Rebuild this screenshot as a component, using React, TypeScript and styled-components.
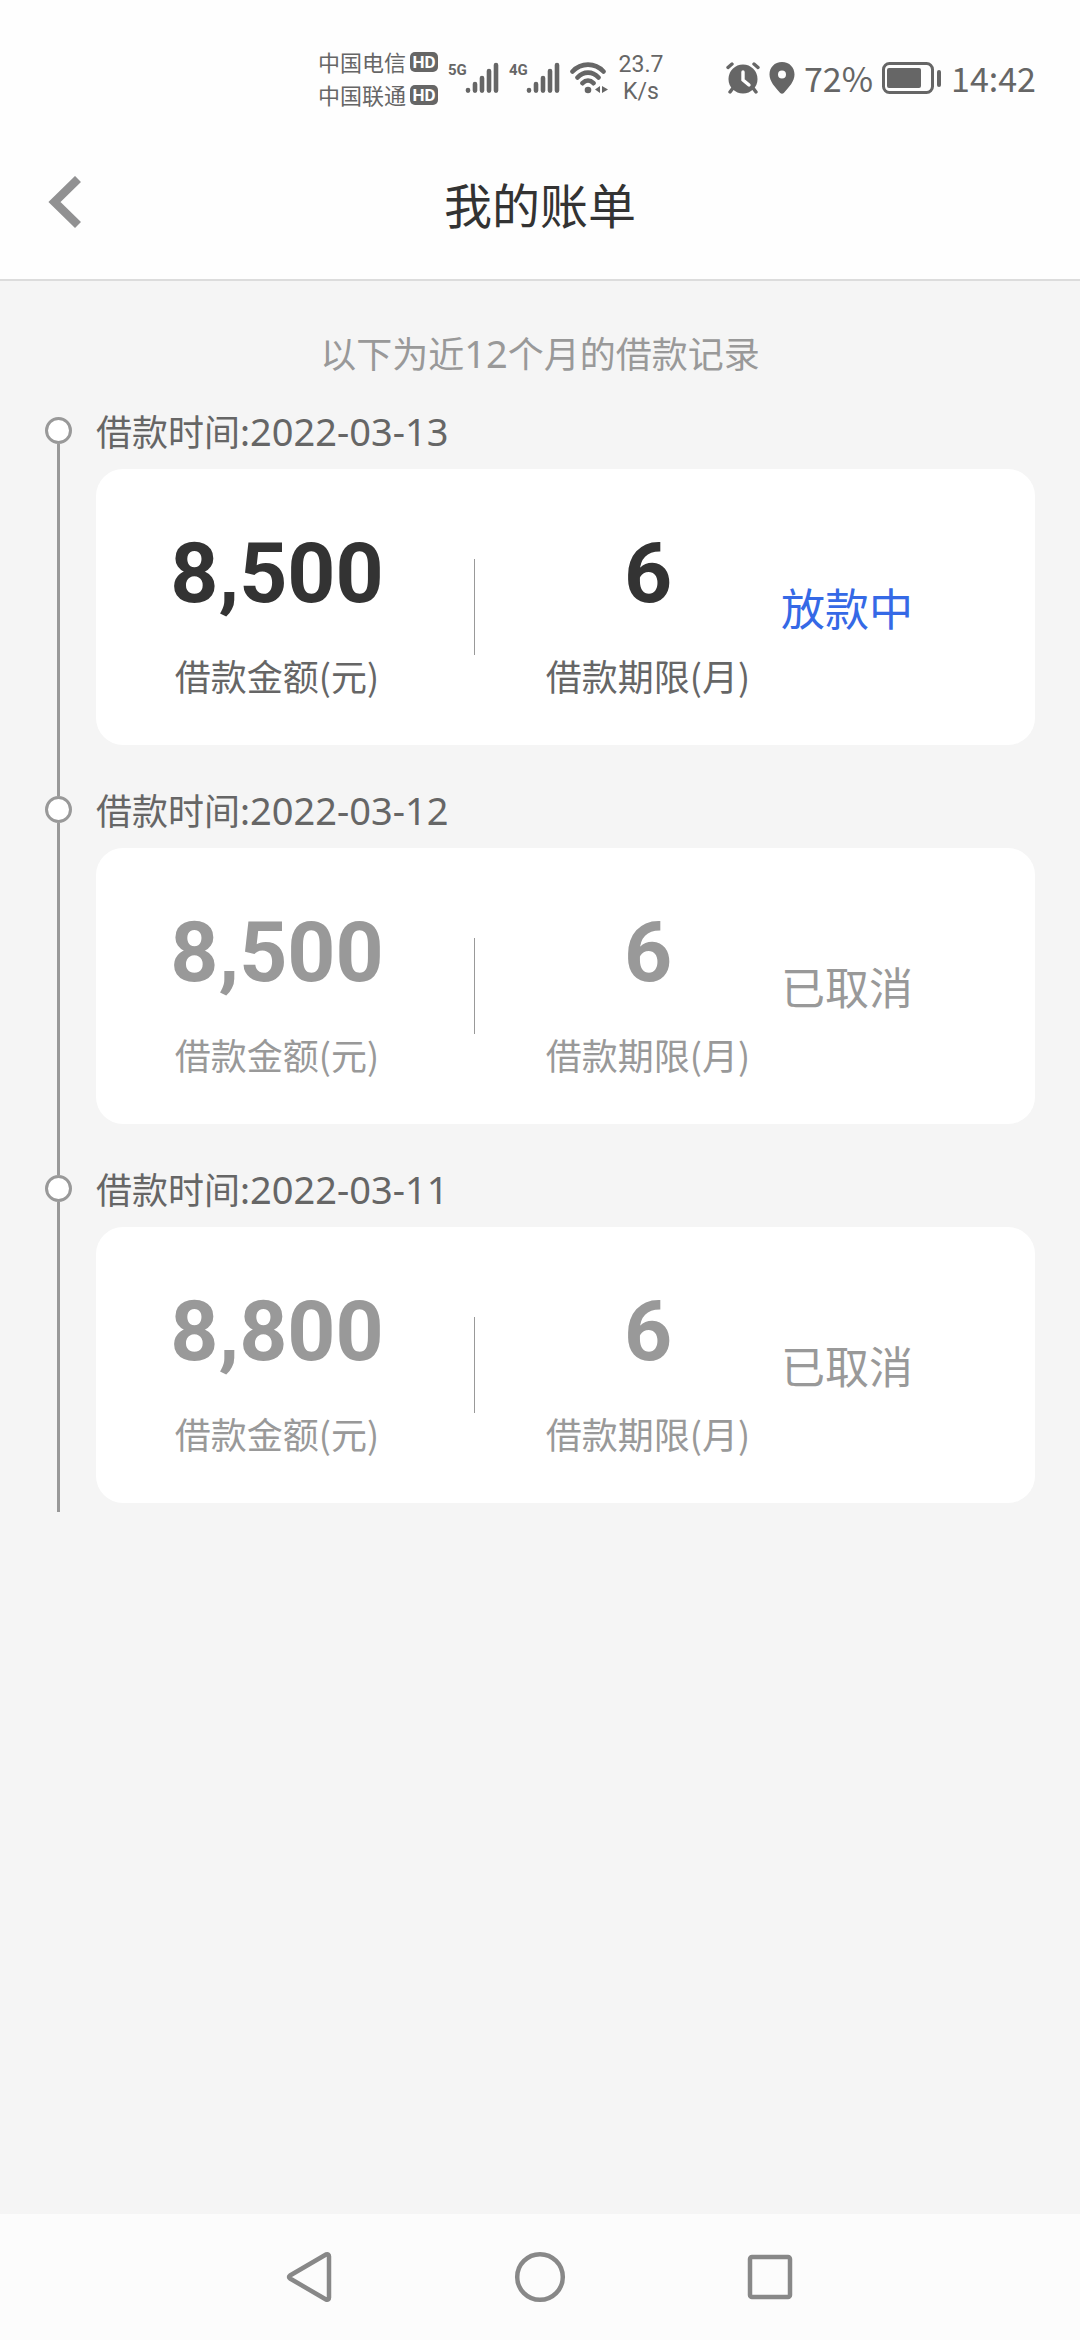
import React from "react";
import styled, { createGlobalStyle } from "styled-components";

const GlobalStyle = createGlobalStyle`
  *, *::before, *::after { box-sizing: border-box; }
  body {
    margin: 0;
    background: #f5f5f5;
    font-family: "Noto Sans CJK SC", sans-serif;
    color: #333;
  }
  h1, p, ol, dl, dt, dd { margin: 0; padding: 0; }
  button { border: 0; padding: 0; background: none; font: inherit; cursor: pointer; }
  svg { display: block; flex: none; }
`;

const Screen = styled.div`
  display: flex;
  flex-direction: column;
  min-height: 100vh;
`;

const StatusBar = styled.div`
  display: flex;
  align-items: center;
  justify-content: flex-end;
  gap: 62px;
  height: 126px;
  padding: 30px 44px 0 0;
  background: #fefefe;
  color: #666;
`;

const StatusGroup = styled.div<{ $gap: number }>`
  display: flex;
  align-items: center;
  gap: ${(p) => p.$gap}px;
`;

const Carriers = styled.div`
  display: flex;
  flex-direction: column;
`;

const Carrier = styled.div`
  display: flex;
  align-items: center;
  gap: 4px;
  font-size: 22px;
  line-height: 33px;
`;

const HdBadge = styled.span`
  width: 28px;
  height: 20px;
  border-radius: 5px;
  background: #666;
  color: #fff;
  font: 700 17px/20px Roboto, sans-serif;
  text-align: center;
`;

const Signal = styled.div`
  display: flex;
  align-items: flex-start;
`;

const SignalType = styled.span`
  width: 17px;
  font: 700 15px/16px Roboto, sans-serif;
`;

const Speed = styled.div`
  width: 46px;
  font: 400 23px/27px Roboto, sans-serif;
  text-align: center;
`;

const StatusText = styled.span`
  font-size: 34px;
  line-height: 40px;
`;

const Header = styled.header`
  display: grid;
  grid-template-columns: 96px 1fr 96px;
  align-items: center;
  height: 155px;
  background: #fefefe;
  border-bottom: 2px solid #dcdcdc;
`;

const BackButton = styled.button`
  display: flex;
  align-items: center;
  height: 96px;
  padding-left: 48px;
`;

const Title = styled.h1`
  font-size: 48px;
  line-height: 72px;
  font-weight: 400;
  text-align: center;
`;

const Main = styled.main`
  flex: 1;
  padding: 44px 45px 40px;
`;

const Latin = styled.span`
  font-family: "Noto Sans", sans-serif;
  font-size: 38px;
  line-height: 1;
`;

const Hint = styled.p`
  font-size: 36px;
  line-height: 54px;
  color: #999;
  text-align: center;
`;

const Timeline = styled.ol`
  list-style: none;
  margin-top: 24px;
`;

const Entry = styled.li`
  display: grid;
  grid-template-columns: 27px 1fr;
  column-gap: 24px;
`;

const Rail = styled.div`
  display: flex;
  flex-direction: column;
  align-items: center;
`;

const RailLine = styled.span<{ $hidden?: boolean; $lead?: boolean }>`
  width: 3px;
  flex: ${(p) => (p.$lead ? "0 0 14px" : "1")};
  background: ${(p) => (p.$hidden ? "transparent" : "#999")};
`;

const Dot = styled.span`
  width: 27px;
  height: 27px;
  border: 3px solid #999;
  border-radius: 50%;
  background: #fff;
`;

const EntryBody = styled.div<{ $last: boolean }>`
  padding-bottom: ${(p) => (p.$last ? 9 : 37)}px;
`;

const EntryDate = styled.p`
  padding-bottom: 12px;
  font-size: 36px;
  line-height: 54px;
  color: #666;
`;

const Card = styled.dl<{ $active: boolean }>`
  display: grid;
  grid-template-columns: 378fr 1px 306fr 254fr;
  align-items: center;
  height: 276px;
  border-radius: 27px;
  background: #fff;
  color: ${(p) => (p.$active ? "#333" : "#999")};
`;

const Figure = styled.div<{ $side: "left" | "right" }>`
  display: flex;
  flex-direction: column-reverse;
  align-items: center;
  gap: 26px;
  padding: ${(p) => (p.$side === "left" ? "14px 16px 0 0" : "14px 0 0 40px")};
`;

const FigureValue = styled.dd`
  font: 700 84px/96px Roboto, sans-serif;
`;

const FigureLabel = styled.dt<{ $active: boolean }>`
  font-size: 36px;
  line-height: 54px;
  white-space: nowrap;
  color: ${(p) => (p.$active ? "#666" : "#999")};
`;

const Divider = styled.div`
  height: 96px;
  background: #999;
`;

const Status = styled.p<{ $active: boolean }>`
  font-size: 44px;
  line-height: 66px;
  white-space: nowrap;
  color: ${(p) => (p.$active ? "#3569e6" : "#999")};
`;

const NavBar = styled.nav`
  display: flex;
  align-items: center;
  justify-content: center;
  gap: 130px;
  height: 126px;
  background: #fcfcfc;
`;

const NavButton = styled.button`
  display: flex;
  align-items: center;
  justify-content: center;
  width: 100px;
  height: 100px;
`;

const SignalBars = () => (
  <svg width="34" height="32" viewBox="0 0 34 32" stroke="#666" strokeWidth="4.600" strokeLinecap="round">
    <path d="M3 28v.6M10 22v6.600M17 16v12.600M24 9v19.600M31 3v25.600" />
  </svg>
);

const WifiIcon = () => (
  <svg width="38" height="32" viewBox="0 0 38 32" fill="none" stroke="#666" strokeWidth="4.600" strokeLinecap="round">
    <path d="M2.500 9.500C11 .3 25 .3 33.500 9.500M7.500 15.500C13.500 9 22.500 9 28.500 15.500M12.500 21.200C16 17.600 20 17.600 23.500 21.200" />
    <circle cx="18" cy="28" r="3.300" fill="#666" stroke="none" />
    <path d="M30 24v7l-5-3.500zM32 24v7l6-3.500z" fill="#666" stroke="none" />
  </svg>
);

const AlarmIcon = () => (
  <svg width="34" height="32" viewBox="0 0 34 32" fill="none" stroke="#666" strokeLinecap="round">
    <circle cx="17" cy="17" r="14.500" fill="#666" stroke="none" />
    <path d="M2 5.500L6 2M32 5.500L28 2M7 26l-3 4M27 26l3 4" strokeWidth="3.400" />
    <path d="M17 10v8l6 5" stroke="#fff" strokeWidth="3.400" />
  </svg>
);

const PinIcon = () => (
  <svg width="26" height="32" viewBox="0 0 26 32">
    <path
      d="M13 0C5.500 0 .5 5.500.5 12.500c0 7 5.500 12.500 10.700 18.500q1.800 1.600 3.600 0C20 25 25.500 19.500 25.500 12.500 25.500 5.500 20.500 0 13 0zm0 8.500a4 4 0 1 1 0 8 4 4 0 0 1 0-8z"
      fill="#666"
      fillRule="evenodd"
    />
  </svg>
);

const BatteryIcon = () => (
  <svg width="60" height="32" viewBox="0 0 60 32">
    <rect x="1.500" y="1.500" width="49" height="29" rx="6" fill="none" stroke="#666" strokeWidth="3" />
    <rect x="5" y="6" width="34" height="20" rx="2" fill="#666" />
    <rect x="55" y="8" width="4" height="17" rx="2" fill="#666" />
  </svg>
);

const ChevronLeft = () => (
  <svg width="36" height="54" viewBox="0 0 36 54" fill="none" stroke="#919192" strokeWidth="8.500">
    <path d="M30 3L6.500 26 30 49" />
  </svg>
);

const NavIcon = ({ children }: { children: React.ReactNode }) => (
  <svg width="52" height="52" viewBox="0 0 52 52" fill="none" stroke="#888" strokeWidth="4.500" strokeLinejoin="round">
    {children}
  </svg>
);

type Loan = { date: string; amount: string; months: string; status: string; active: boolean };

const loans: Loan[] = [
  { date: "2022-03-13", amount: "8,500", months: "6", status: "放款中", active: true },
  { date: "2022-03-12", amount: "8,500", months: "6", status: "已取消", active: false },
  { date: "2022-03-11", amount: "8,800", months: "6", status: "已取消", active: false },
];

const LoanEntry = ({ loan, first, last }: { loan: Loan; first: boolean; last: boolean }) => (
  <Entry>
    <Rail>
      <RailLine $lead $hidden={first} />
      <Dot />
      <RailLine />
    </Rail>
    <EntryBody $last={last}>
      <EntryDate>
        借款时间:<Latin>{loan.date}</Latin>
      </EntryDate>
      <Card $active={loan.active}>
        <Figure $side="left">
          <FigureLabel $active={loan.active}>借款金额(元)</FigureLabel>
          <FigureValue>{loan.amount}</FigureValue>
        </Figure>
        <Divider />
        <Figure $side="right">
          <FigureLabel $active={loan.active}>借款期限(月)</FigureLabel>
          <FigureValue>{loan.months}</FigureValue>
        </Figure>
        <Status $active={loan.active}>{loan.status}</Status>
      </Card>
    </EntryBody>
  </Entry>
);

export default function App() {
  return (
    <>
      <GlobalStyle />
      <Screen>
        <StatusBar>
          <StatusGroup $gap={10}>
            <Carriers>
              <Carrier>
                中国电信<HdBadge>HD</HdBadge>
              </Carrier>
              <Carrier>
                中国联通<HdBadge>HD</HdBadge>
              </Carrier>
            </Carriers>
            <Signal>
              <SignalType>5G</SignalType>
              <SignalBars />
            </Signal>
            <Signal>
              <SignalType>4G</SignalType>
              <SignalBars />
            </Signal>
            <WifiIcon />
            <Speed>
              23.7
              <br />
              K/s
            </Speed>
          </StatusGroup>
          <StatusGroup $gap={9}>
            <AlarmIcon />
            <PinIcon />
            <StatusText>72%</StatusText>
            <BatteryIcon />
            <StatusText>14:42</StatusText>
          </StatusGroup>
        </StatusBar>
        <Header>
          <BackButton type="button" aria-label="返回">
            <ChevronLeft />
          </BackButton>
          <Title>我的账单</Title>
        </Header>
        <Main>
          <Hint>
            以下为近<Latin>12</Latin>个月的借款记录
          </Hint>
          <Timeline>
            {loans.map((loan, i) => (
              <LoanEntry key={loan.date} loan={loan} first={i === 0} last={i === loans.length - 1} />
            ))}
          </Timeline>
        </Main>
        <NavBar>
          <NavButton type="button" aria-label="返回">
            <NavIcon>
              <path d="M6 24.500L42 3.500q3-1 3 2v41q0 3-3 2L6 27.500q-2-1.500 0-3z" />
            </NavIcon>
          </NavButton>
          <NavButton type="button" aria-label="主页">
            <NavIcon>
              <circle cx="26" cy="26" r="22.800" />
            </NavIcon>
          </NavButton>
          <NavButton type="button" aria-label="最近任务">
            <NavIcon>
              <rect x="6" y="6" width="40" height="40" rx="2" />
            </NavIcon>
          </NavButton>
        </NavBar>
      </Screen>
    </>
  );
}
